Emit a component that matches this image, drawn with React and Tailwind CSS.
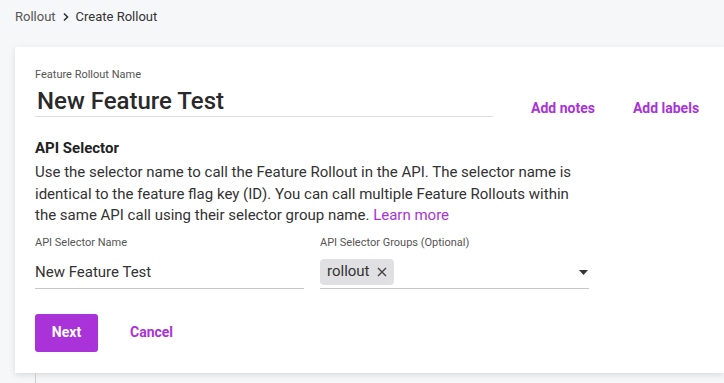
export default function App() {
  const purple = "text-[#a933d9]";
  return (
    <div className="min-h-[383px] w-[724px] overflow-hidden bg-[#f6f7f9] font-['Roboto',sans-serif] text-[#333]">
      <div className="flex h-[32px] items-center gap-[6px] pl-[15px] pt-[1px] text-[13px]">
        <span className="text-[#555]">Rollout</span>
        <svg width="8" height="10" viewBox="0 0 8 10" className="mt-[1px]">
          <path d="M2 1.5 L5.5 5 L2 8.5" fill="none" stroke="#333" strokeWidth="1.6" />
        </svg>
        <span className="text-[#333]">Create Rollout</span>
      </div>
      <div className="ml-[15px] mt-[15px] h-[326px] bg-white pl-[20px] pt-[21px] shadow-[0_2px_6px_rgba(0,0,0,0.12)]">
        <div className="flex items-end">
          <div className="w-[458px]">
            <div className="text-[11px] leading-[13px] text-[#555]">Feature Rollout Name</div>
            <div className="mt-[7px] h-[29px] border-b border-[#ddd] pl-[2px] text-[24px] leading-[26px] font-medium text-[#2a2a2a]">
              New Feature Test
            </div>
          </div>
          <button className={`ml-[38px] -mb-[2px] text-[14px] font-bold ${purple}`}>Add notes</button>
          <button className={`ml-[38px] -mb-[2px] text-[14px] font-bold ${purple}`}>Add labels</button>
        </div>
        <div className="mt-[21px] text-[15px] font-bold leading-[20px] text-[#222]">API Selector</div>
        <p className="mt-[4px] w-[545px] text-[15px] leading-[21.5px] text-[#333]">
          Use the selector name to call the Feature Rollout in the API. The selector name is identical to the feature flag key (ID). You can call multiple Feature Rollouts within the same API call using their selector group name.{" "}
          <span className={purple}>Learn more</span>
        </p>
        <div className="mt-[9px] flex gap-[16px]">
          <div className="w-[269px]">
            <div className="text-[11px] leading-[13px] text-[#555]">API Selector Name</div>
            <div className="mt-[9px] flex h-[31px] items-center border-b border-[#c8c8c8] text-[15px] text-[#333]">
              New Feature Test
            </div>
          </div>
          <div className="w-[269px]">
            <div className="text-[11px] leading-[13px] text-[#555]">API Selector Groups (Optional)</div>
            <div className="mt-[9px] flex h-[31px] items-start border-b border-[#c8c8c8] pt-[1px]">
              <span className="flex h-[26px] items-center gap-[7px] rounded-[4px] bg-[#e0e0e2] px-[7px] text-[15px] text-[#333]">
                rollout
                <svg width="10" height="10" viewBox="0 0 10 10">
                  <path d="M1 1 L9 9 M9 1 L1 9" stroke="#444" strokeWidth="1.4" />
                </svg>
              </span>
              <svg width="9" height="5" viewBox="0 0 9 5" className="ml-auto mr-[1px] mt-[11px]">
                <path d="M0 0 H9 L4.5 5 Z" fill="#333" />
              </svg>
            </div>
          </div>
        </div>
        <div className="mt-[25px] flex items-center">
          <button className="h-[38px] w-[63px] rounded-[3px] bg-[#a932d9] text-[14px] font-bold text-white">Next</button>
          <button className={`ml-[32px] text-[14px] font-bold ${purple}`}>Cancel</button>
        </div>
      </div>
      <div className="ml-[35px] h-[20px] w-px bg-[#ccc]" />
    </div>
  );
}
